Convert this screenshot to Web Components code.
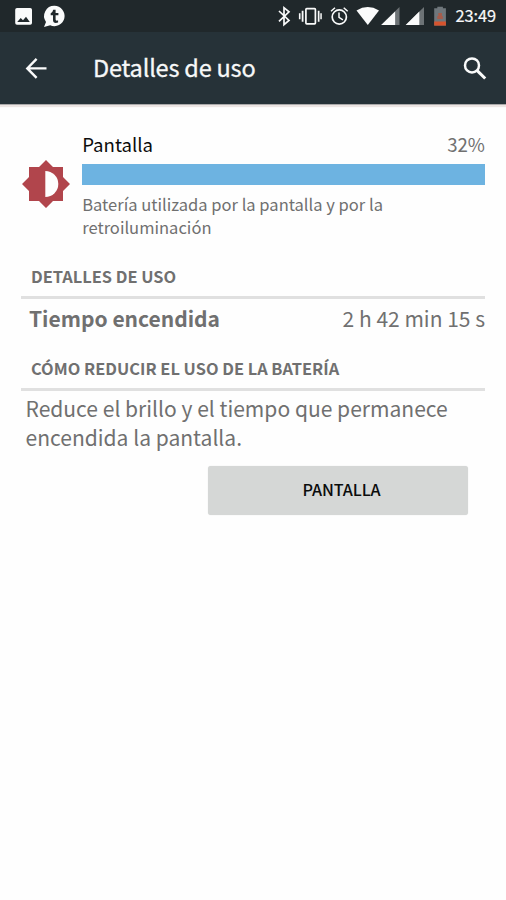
<!DOCTYPE html>
<html lang="es"><head><meta charset="utf-8"><title>Detalles de uso</title>
<style>
html,body{height:100%}
body{margin:0;background:#fefefe;color:#707070;font-family:"Noto Sans CJK SC","Noto Sans",sans-serif;overflow:hidden}
</style></head><body>
<battery-screen></battery-screen>
<script>
const define=(name,html)=>customElements.define(name,class extends HTMLElement{
  constructor(){super();this.attachShadow({mode:'open'}).innerHTML=html}
});

define('status-bar',`<style>
:host{display:flex;height:32px;background:#20282b;color:#f8f9f9;justify-content:space-between}
svg{display:block;fill:#fafbfb}
time{font-size:16.400px;font-weight:400;line-height:30px;height:32px;width:50.500px;letter-spacing:-.1px;-webkit-text-stroke:.2px #f8f9f9}
.right{display:flex}
</style>
<svg width="80" height="32" viewBox="0 0 80 32">
  <path fill-rule="evenodd" d="M17 8h13.200q1.800 0 1.800 1.800v13.200q0 1.800-1.800 1.800h-13.200q-1.800 0-1.800-1.800v-13.200q0-1.800 1.800-1.800zM17.200 22h12.600l-3.800-5.300-3 3.600-2.300-2.200z"/>
  <path d="M54.500 5.800a10.200 10.200 0 1 1-4.300 19.500L44 27l2-5.100A10.200 10.200 0 0 1 54.500 5.800z"/>
  <path fill="#20282b" d="M53.200 9.800h2.400v3.300h2.800v2.200h-2.800v4.200q0 1.300 1.500 1.100l1-.2v2.200q-5.100 1.300-5.100-2.600v-4.700H50.700v-2q2-.8 2.500-3.500z"/>
</svg>
<div class="right">
<svg width="176" height="32" viewBox="270 0 176 32">
  <path d="M279 11l10 9.500-5 4.200V7.700l5 4.200-10 9.500" fill="none" stroke="#fafbfb" stroke-width="1.700"/>
  <rect x="305.900" y="8.700" width="9.500" height="15.100" rx=".8" fill="none" stroke="#fafbfb" stroke-width="1.700"/>
  <path d="M301.700 10.700h1.800v11h-1.800zM298.900 13.300h1.600v6h-1.600zM317.800 10.700h1.700v11h-1.700zM320.300 13.300h1.500v6h-1.500z"/>
  <circle cx="339.300" cy="17" r="7.100" fill="none" stroke="#fafbfb" stroke-width="1.700"/>
  <path d="M339 12.500v4.900l3.900 2.500M331 11.200l4-3.500M347.700 11.200l-4-3.500" fill="none" stroke="#fafbfb" stroke-width="1.500"/>
  <path d="M356.500 10.500Q367.700 3.600 379 10.500L367.800 25z"/>
  <path d="M399.500 7v18H381.200z" fill="#6d7376"/><path d="M395.100 11.400V25H381.200z"/>
  <path d="M424 7v18H405.700z" fill="#6d7376"/><path d="M419.300 11.600V25H405.700z"/>
  <path d="M437.300 6.800h5.600v1.500h3v17.300h-11.700V8.300h3.100z" fill="#6f777c"/>
  <path d="M434.200 21.500h11.700v4.100h-11.700z" fill="#d6542e"/>
  <path d="M438.300 13h3.600v3h-3.600zM437.300 16h5.500v3h-5.500z" fill="#a65c4b"/>
</svg>
<span style="width:9.500px"></span><time>23:49</time></div>`);

define('app-bar',`<style>
:host{display:flex;box-sizing:border-box;height:72px;padding:0 18px 0 24px;align-items:center;background:#263238;color:#f7f8f8;box-shadow:0 1px 0 #aaa9aa,0 3px 1px #ece5e3}
h1{flex:1;margin:0 0 0 45px;font-size:23.500px;font-weight:400;line-height:70px;height:72px;letter-spacing:-.2px;-webkit-text-stroke:.3px #f7f8f8}
svg{display:block;fill:none;stroke:#fafbfb}
</style>
<svg width="24" height="24" viewBox="0 0 24 24"><path d="M22.500 12.400H4M12.600 2.900L3.300 12.400l9.300 9.500" stroke-width="2.400"/></svg>
<h1><slot></slot></h1>
<svg width="26" height="26" viewBox="462 55 26 26"><circle cx="472" cy="65.400" r="7" stroke-width="2.500"/><path d="M477.200 70.600l8 7.900" stroke-width="3"/></svg>`);

define('usage-summary',`<style>
:host{display:grid;grid-template-columns:48px 1fr;column-gap:12px;margin-left:1.200px}
svg{display:block;margin-top:28px}
.head{display:flex;justify-content:space-between;font-size:18.600px;line-height:24px;height:32px}
.name{color:#0c0c0c}
.bar{height:20.500px;background:#6db3e1}
p{margin:8px 0 0;font-size:16.550px;line-height:23px;width:330px}
</style>
<svg width="48" height="48" viewBox="0 0 48 48"><path fill="#b1454c" d="M24 0l7 7h10v10l7 7-7 7v10H31l-7 7-7-7H7V31L0 24l7-7V7h10z"/><path fill="#fefefe" d="M23.300 11a13 13 0 0 1 0 26z"/></svg>
<div><div class="head"><span class="name"><slot name="name"></slot></span><slot name="percent"></slot></div>
<div class="bar"></div><p><slot></slot></p></div>`);

define('section-title',`<style>
:host{display:block;box-sizing:border-box;height:35px;padding-left:10px;border-bottom:3px solid #e0e0e0;font-size:16.400px;font-weight:700;line-height:24px}
</style><slot></slot>`);

define('detail-row',`<style>
:host{display:flex;justify-content:space-between;padding-left:8px;height:57px;font-size:21px;line-height:39px}
b{font-weight:700}
</style><b><slot name="label"></slot></b><slot></slot>`);

define('action-button',`<style>
:host{display:block;width:260px;height:49px}
button{display:block;width:100%;height:100%;padding:0 0 2px 8px;border:0;border-radius:3px;background:#d5d7d6;color:#0b0c0c;font:500 16.200px/47px "Noto Sans CJK SC","Noto Sans",sans-serif;letter-spacing:-.1px;box-shadow:0 0 1px #d5d7d6}
</style><button><slot></slot></button>`);

define('battery-screen',`<style>
:host{display:block;height:900px}
main{padding:28px 21px 0}
usage-summary{height:129px}
.tip{margin:0;padding:3px 0 0 4.500px;font-size:21.050px;line-height:29.300px;height:75px;box-sizing:border-box}
action-button{margin-left:186.500px}
</style>
<status-bar></status-bar>
<app-bar>Detalles de uso</app-bar>
<main>
<usage-summary><span slot="name">Pantalla</span><span slot="percent">32%</span>Batería utilizada por la pantalla y por la retroiluminación</usage-summary>
<section-title style="margin-top:3px">DETALLES DE USO</section-title>
<detail-row><span slot="label">Tiempo encendida</span><span>2 h 42 min 15 s</span></detail-row>
<section-title>CÓMO REDUCIR EL USO DE LA BATERÍA</section-title>
<p class="tip">Reduce el brillo y el tiempo que permanece encendida la pantalla.</p>
<action-button>PANTALLA</action-button>
</main>`);
</script></body></html>
